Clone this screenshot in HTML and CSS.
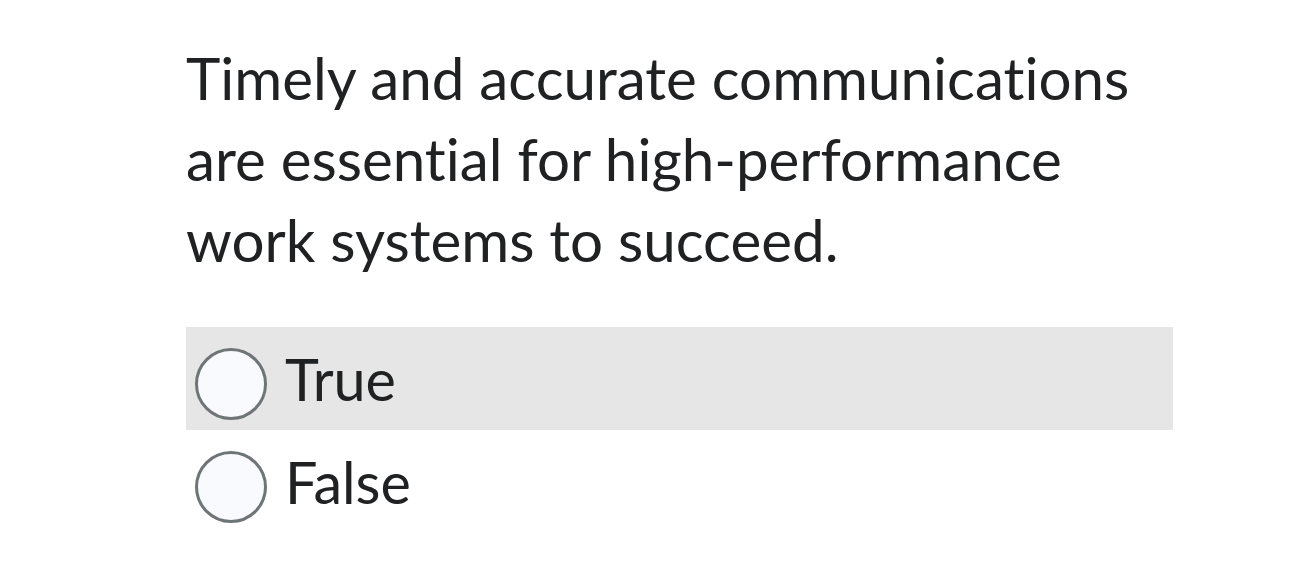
FILE: index.html
```html
<!DOCTYPE html>
<html lang="en">
<head>
<meta charset="utf-8">
<link rel="stylesheet" href="styles.css">
</head>
<body>
<div class="question">
  <p class="prompt">Timely and accurate communications are essential for high-performance work systems to succeed.</p>
  <div class="options">
    <label class="option option-hover"><span class="radio"></span><span class="label">True</span></label>
    <label class="option"><span class="radio"></span><span class="label">False</span></label>
  </div>
</div>
</body>
</html>
```
FILE: styles.css
```css
html, body {
  margin: 0;
  padding: 0;
  background: #ffffff;
}
body {
  font-family: Lato, "Noto Sans", sans-serif;
  color: #202122;
  font-variant-ligatures: none;
  font-feature-settings: "liga" 0, "clig" 0;
}
.question {
  width: 987px;
  margin-left: 186px;
  padding-top: 37px;
}
.prompt {
  margin: 0;
  font-size: 58.3px;
  line-height: 81px;
  width: 980px;
}
.options {
  margin-top: 47px;
  display: flex;
  flex-direction: column;
}
.option {
  display: flex;
  align-items: center;
  height: 103px;
  font-size: 57.5px;
}
.option-hover {
  background: #e6e6e6;
}
.radio {
  box-sizing: border-box;
  width: 72px;
  height: 72px;
  border: 3px solid #6f7477;
  border-radius: 50%;
  background: #f9fafe;
  margin-left: 9px;
  margin-top: 10px;
  flex: none;
}
.label {
  margin-left: 18px;
}
```
